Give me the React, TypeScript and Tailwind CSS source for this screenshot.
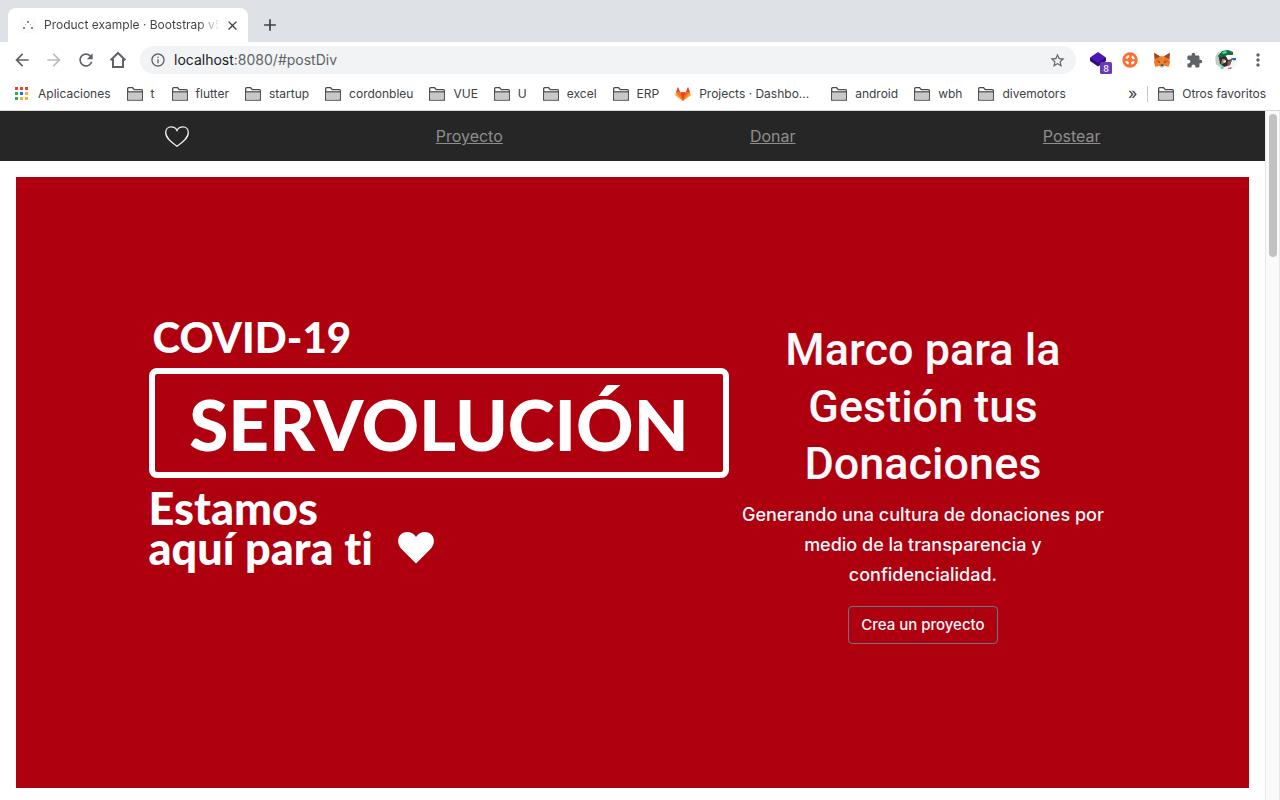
import type { ReactNode } from 'react';
import { MdArrowBack, MdArrowForward, MdRefresh, MdInfoOutline, MdStarBorder, MdExtension, MdMoreVert, MdClose, MdAdd } from 'react-icons/md';

function FolderIcon() {
  return (
    <svg width="16" height="14" viewBox="0 0 16 14" className="shrink-0" aria-hidden="true">
      <path d="M.7 13.2V1.6Q.7.7 1.6.7H5.6L7.3 2.6H14.4Q15.3 2.6 15.3 3.5V13.2Z" fill="#fff" stroke="#4a4a4a" strokeWidth="1.3" />
      <path d="M1.3 5H14.7V12.6H1.3Z" fill="#c8c8c8" />
      <path d="M.7 4.8H15.3" stroke="#4a4a4a" strokeWidth="1.2" />
    </svg>
  );
}

function AppsIcon() {
  const colors = ['#ea4335', '#ea4335', '#ea4335', '#34a853', '#1a73e8', '#f9ab40', '#34a853', '#f9ab40', '#f9ab40'];
  return (
    <svg width="14" height="14" viewBox="0 0 14 14" className="shrink-0" aria-hidden="true">
      {colors.map((c, i) => (
        <rect key={i} x={(i % 3) * 5} y={Math.floor(i / 3) * 5} width="3" height="3" fill={c} />
      ))}
    </svg>
  );
}

function HomeIcon() {
  return (
    <svg width="18" height="18" viewBox="0 0 18 18" fill="none" stroke="#5f6368" strokeWidth="2" aria-hidden="true">
      <path d="M1.6 9.2 9 2 16.4 9.2M4 8V16H14V8" />
    </svg>
  );
}

function GitlabIcon() {
  return (
    <svg width="16" height="16" viewBox="0 0 16 16" className="shrink-0" aria-hidden="true">
      <path d="M8 15 .2 9.2 1 6.2H15L15.8 9.2Z" fill="#fca326" />
      <path d="M8 15 1 6.2H5.2ZM8 15 15 6.2H10.8Z" fill="#fc6d26" />
      <path d="M8 15 5.2 6.2H10.8ZM1 6.2 3 .8 5.2 6.2ZM15 6.2 13 .8 10.8 6.2Z" fill="#e24329" />
    </svg>
  );
}

function LayersIcon() {
  return (
    <svg width="28" height="28" viewBox="0 0 28 28" aria-hidden="true">
      <path d="M6 12 14 8 22 12V15L14 20.5 6 15Z" fill="#2e0f78" />
      <path d="M6 11.5 14 6 22 11.5 14 17Z" fill="#4f17b5" />
      <rect x="16" y="16" width="12" height="12" rx="1.5" fill="#673ab7" />
      <text x="22" y="25.5" fontSize="9" fontFamily="Inter, sans-serif" fontWeight="500" fill="#fff" textAnchor="middle">8</text>
    </svg>
  );
}

function RingIcon() {
  return (
    <svg width="16" height="16" viewBox="0 0 16 16" aria-hidden="true">
      <circle cx="8" cy="8" r="7.7" fill="#fb6f32" />
      <circle cx="8" cy="8" r="3.9" fill="none" stroke="#fff" strokeWidth="2.4" strokeDasharray="3.4 2.726" strokeDashoffset="-1.36" />
    </svg>
  );
}

function FoxIcon() {
  return (
    <svg width="18" height="16" viewBox="0 0 18 16" aria-hidden="true">
      <path d="M1 .8 7 4.2H11L17 .8 16.4 7 17 10.6 15.6 15 11.6 13.8 10.4 15.2H7.6L6.4 13.8 2.4 15 1 10.6 1.6 7Z" fill="#ee8030" />
      <path d="M1 .8 7 4.2 5.4 5.6 1.8 7.3ZM17 .8 11 4.2 12.6 5.6 16.2 7.3Z" fill="#9a4b25" />
      <path d="M5.2 6.3 7 9.8 1.2 10.6ZM12.8 6.3 11 9.8 16.8 10.6Z" fill="#e2711d" />
      <path d="M4.4 9.4 7 9.8 6.7 11ZM13.6 9.4 11 9.8 11.3 11Z" fill="#33343b" />
      <path d="M6.4 13.6 7.8 12.8H10.2L11.6 13.6 10.4 15.2H7.6Z" fill="#c9b9aa" />
      <path d="M7.8 12.6H10.2L10.5 13.8H7.5Z" fill="#2b2320" />
    </svg>
  );
}

function AvatarIcon() {
  return (
    <svg width="22" height="22" viewBox="0 0 22 22" className="rounded-full" aria-hidden="true">
      <rect width="22" height="22" fill="#f2f6f6" />
      <path d="M0 6 4 2 6 8 5 18 1 15Z" fill="#b9cfc4" />
      <path d="M3 7 7 2 13 1 18 3 18 6 12 6 8 9 4 9Z" fill="#186b42" />
      <path d="M7 3 11 2 12 4 8 5Z" fill="#4ee39b" />
      <path d="M4 9 10 7 17 10 15 16 9 18 5 15Z" fill="#352c2b" />
      <path d="M7 10 10 10 9 14 6 16Z" fill="#a57d6c" />
      <path d="M11 7 19 6 17 10 13 11Z" fill="#fff" />
      <path d="M8 12 11 11 11 13 9 14Z" fill="#e9f3ee" />
      <path d="M13 12 17 11 15 16 12 17Z" fill="#8d5c53" />
      <path d="M16 9H21V11L18 11.5Z" fill="#2a6b9f" />
      <path d="M5 16 9 18 8 20H6Z" fill="#62d9a8" />
      <path d="M13 19 17 18 16 20H13Z" fill="#c65bb0" />
    </svg>
  );
}

function IconButton({ label, children }: { label: string; children: ReactNode }) {
  return (
    <button type="button" aria-label={label} className="flex h-8 w-8 items-center justify-center text-[#5f6368]">
      {children}
    </button>
  );
}

function Bookmark({ label, icon = <FolderIcon /> }: { label: string; icon?: ReactNode }) {
  return (
    <a href="#" className="flex min-w-[29px] shrink-0 items-center gap-2 whitespace-nowrap">
      {icon}
      {label}
    </a>
  );
}

function BrowserChrome() {
  return (
    <header className="shrink-0 border-b border-[#d5d7da] bg-white text-xs text-[#3c4043]">
      <div className="flex h-[42px] items-end bg-[#dee1e6]">
        <div className="ml-2 flex h-[34px] w-60 items-center rounded-t-lg bg-white pr-2 pl-3">
          <svg width="16" height="16" viewBox="0 0 16 16" className="shrink-0" aria-hidden="true">
            <rect width="16" height="16" fill="#fafafa" />
            <path d="M7 4h2v2H7ZM3 10h2v2H3ZM11 10h2v2h-2Z" fill="#888" />
            <path d="M5 7h1v1H5ZM10 7h1v1h-1Z" fill="#bbb" />
          </svg>
          <span className="ml-2 flex-1 overflow-hidden bg-linear-to-r from-[#3c4043] from-88% to-transparent bg-clip-text whitespace-nowrap text-transparent">
            Product example · Bootstrap v5
          </span>
          <button type="button" aria-label="Cerrar pestaña" className="ml-1 flex h-4 w-4 items-center justify-center">
            <MdClose size={15} />
          </button>
        </div>
        <button type="button" aria-label="Nueva pestaña" className="ml-3 flex h-[34px] w-5 items-center justify-center">
          <MdAdd size={20} />
        </button>
      </div>

      <div className="flex h-9 items-center px-[6px]">
        <IconButton label="Atrás"><MdArrowBack size={20} /></IconButton>
        <IconButton label="Adelante"><MdArrowForward size={20} className="text-[#babcbe]" /></IconButton>
        <IconButton label="Recargar"><MdRefresh size={20} /></IconButton>
        <IconButton label="Inicio"><HomeIcon /></IconButton>
        <div className="ml-[6px] flex h-7 flex-1 items-center rounded-full bg-[#f1f3f4] px-[10px]">
          <MdInfoOutline size={16} className="text-[#5f6368]" />
          <a href="#postDiv" className="ml-2 flex-1 text-sm text-[#5f6368]">
            <span className="text-[#202124]">localhost</span>:8080/#postDiv
          </a>
          <MdStarBorder size={17} className="text-[#5f6368]" />
        </div>
        <div className="ml-[6px] flex items-center">
          <IconButton label="Capas"><LayersIcon /></IconButton>
          <IconButton label="Ayuda"><RingIcon /></IconButton>
          <IconButton label="Cartera"><FoxIcon /></IconButton>
          <IconButton label="Extensiones"><MdExtension size={17} /></IconButton>
          <IconButton label="Perfil"><AvatarIcon /></IconButton>
          <IconButton label="Menú"><MdMoreVert size={20} /></IconButton>
        </div>
      </div>

      <nav aria-label="Marcadores" className="flex h-8 items-center gap-4 pr-[14px] pl-[15px]">
        <a href="#" className="flex items-center gap-[9px]">
          <AppsIcon />
          Aplicaciones
        </a>
        <Bookmark label="t" />
        <Bookmark label="flutter" />
        <Bookmark label="startup" />
        <Bookmark label="cordonbleu" />
        <Bookmark label="VUE" />
        <Bookmark label="U" />
        <Bookmark label="excel" />
        <Bookmark label="ERP" />
        <div className="w-[140px]">
          <Bookmark label="Projects · Dashbo..." icon={<GitlabIcon />} />
        </div>
        <Bookmark label="android" />
        <Bookmark label="wbh" />
        <Bookmark label="divemotors" />
        <div className="ml-auto flex items-center gap-[10px]">
          <button type="button" aria-label="Más marcadores" className="pb-[2px] text-base leading-4">»</button>
          <span className="h-4 w-px bg-[#c4c7cb]" />
          <Bookmark label="Otros favoritos" />
        </div>
      </nav>
    </header>
  );
}

function SiteNav() {
  return (
    <nav className="bg-[#262626]">
      <div className="mx-auto flex h-[50px] max-w-[960px] items-center justify-between px-3 text-[#8e8e8e]">
        <a href="#" aria-label="Inicio">
          <svg width="24" height="24" viewBox="0 0 24 24" fill="none" stroke="#f1f1f1" strokeWidth="1.3" aria-hidden="true">
            <path d="M12 22.3C7 18.7.7 14.2.7 8.4.7 5 3.1 2.9 6 2.9 8.8 2.9 11 4.2 12 6.4 13 4.2 15.2 2.9 18 2.9 20.9 2.9 23.3 5 23.3 8.4 23.3 14.2 17 18.7 12 22.3Z" />
          </svg>
        </a>
        <a href="#proyecto" className="underline">Proyecto</a>
        <a href="#donar" className="underline">Donar</a>
        <a href="#postDiv" className="underline">Postear</a>
      </div>
    </nav>
  );
}

function CampaignLogo() {
  return (
    <div className="w-3/5 shrink-0 font-[Lato,sans-serif] font-black text-white [font-variant-ligatures:none]">
      <p className="pl-1 text-[42px] leading-8">COVID-19</p>
      <p className="mt-[15px] flex h-[110px] items-center justify-center rounded-lg border-6 border-white text-[71px] leading-none">
        SERVOLUCIÓN
      </p>
      <p className="mt-[10px] text-[45px] leading-10">Estamos</p>
      <p className="flex items-center gap-6 text-[45px] leading-10">
        aquí para ti
        <svg width="38" height="34" viewBox="0 0 38 34" fill="#fff" aria-hidden="true">
          <path d="M19 32.5 4 17.5C-2 10.5 2 1 10 1 14 1 17 2.500 19 6 21 2.500 24 1 28 1 36 1 40 10.500 34 17.500Z" />
        </svg>
      </p>
    </div>
  );
}

function Hero() {
  return (
    <section className="m-4 bg-[#af0010] py-36">
      <div className="mx-auto flex max-w-[968px] items-start">
        <CampaignLogo />
        <div className="flex-1 text-center text-[#f8f9fa]">
          <h1 className="px-10 font-[Roboto,sans-serif] text-[45px] leading-[57px] font-medium">
            Marco para la Gestión tus Donaciones
          </h1>
          <p className="mt-2 px-2 text-lg leading-[30px] font-medium">
            Generando una cultura de donaciones por medio de la transparencia y confidencialidad.
          </p>
          <button type="button" className="mt-4 h-[38px] rounded border border-[#6c757d] px-3 text-[15px] font-medium">
            Crea un proyecto
          </button>
        </div>
      </div>
    </section>
  );
}

export default function App() {
  return (
    <div className="flex h-screen flex-col overflow-hidden bg-white font-[Inter,sans-serif]">
      <BrowserChrome />
      <div className="flex min-h-0 flex-1">
        <main className="min-w-0 flex-1 overflow-hidden">
          <SiteNav />
          <Hero />
        </main>
        <div className="w-[15px] shrink-0 border-x border-[#e8e8e8] bg-[#fafafa] px-[3px] pt-[3px]">
          <div className="h-[143px] w-2 rounded-full bg-[#c1c1c1]" />
        </div>
      </div>
    </div>
  );
}
